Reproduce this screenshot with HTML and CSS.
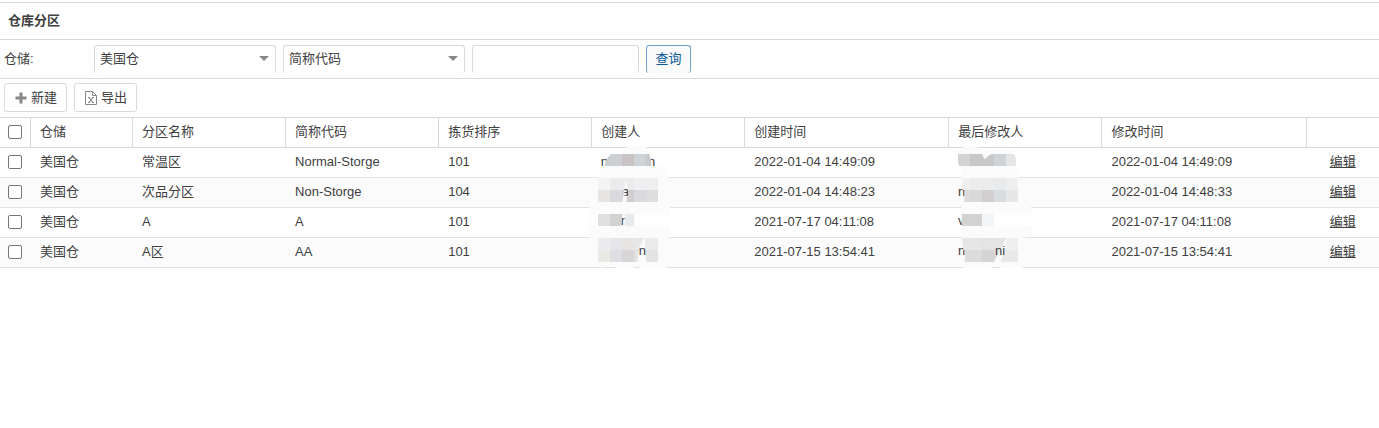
FILE: index.html
```html
<!DOCTYPE html>
<html lang="zh-CN">
<head>
    <meta charset="UTF-8">
    <meta name="viewport" content="width=device-width, initial-scale=1.0">
    <title>仓库分区</title>
    <link rel="stylesheet" href="styles.css">
</head>
<body>
    <h1 class="page-title">仓库分区</h1>

    <form class="filter-bar">
        <label class="filter-label" for="warehouse">仓储:</label>
        <div class="select-box">
            <select id="warehouse">
                <option>美国仓</option>
            </select>
        </div>
        <div class="select-box">
            <select aria-label="查询字段">
                <option>简称代码</option>
            </select>
        </div>
        <input class="keyword" type="text" aria-label="关键字">
        <button class="search-btn" type="button">查询</button>
    </form>

    <div class="toolbar">
        <button class="tool-btn" type="button">
            <svg width="12" height="12" viewBox="0 0 12 12"><path d="M4.5 0.5h3v4h4v3h-4v4h-3v-4h-4v-3h4z" fill="#878787"/></svg>
            新建
        </button>
        <button class="tool-btn" type="button">
            <svg width="12" height="14" viewBox="0 0 12 14" fill="none" stroke="#878787"><path d="M0.5 0.5h7l4 4v9h-11z"/><path d="M7.5 0.5v4h4"/><path d="M3 6.5h2M7 6.5h2M3 11.5h2M7 11.5h2"/><path d="M4 6.5l4 5M8 6.5l-4 5" stroke-width="1.2"/></svg>
            导出
        </button>
    </div>

    <table class="grid">
        <colgroup>
            <col class="col-check">
            <col class="col-small">
            <col class="col-medium">
            <col class="col-medium">
            <col class="col-medium">
            <col class="col-medium">
            <col class="col-large">
            <col class="col-medium">
            <col class="col-large">
            <col>
        </colgroup>
        <thead>
            <tr>
                <th class="check"><input type="checkbox" aria-label="全选"></th>
                <th>仓储</th>
                <th>分区名称</th>
                <th>简称代码</th>
                <th>拣货排序</th>
                <th>创建人</th>
                <th>创建时间</th>
                <th>最后修改人</th>
                <th>修改时间</th>
                <th></th>
            </tr>
        </thead>
        <tbody>
            <tr>
                <td class="check"><input type="checkbox" aria-label="选择 常温区"></td>
                <td>美国仓</td>
                <td>常温区</td>
                <td>Normal-Storge</td>
                <td>101</td>
                <td class="masked">
                    <!-- 创建人打码 -->
                    <svg class="mosaic mosaic-creator" width="82" height="130" viewBox="24 90 246 390">
                        <defs>
                            <clipPath id="gap"><path d="M133 200h11v61h-11z"/></clipPath>
                        </defs>
                        <path d="M72 152Q75 120 128 115Q132 92 170 91Q208 92 214 115L222 150Q258 152 265 190V260H270V297H265V333H270V365H265L262 440L258 478H180V455H165Q140 478 110 458L85 452L60 458L55 440L30 365L25 333L30 297L25 262L54 259V190Q56 160 72 152Z" fill="#fbfbfb"/>
                        <path d="M30 299H265V333H30Z" fill="#fefefe"/>
                        <g class="letters"><text x="62" y="152">n</text><text x="204" y="152">n</text><text x="122" y="329">r</text></g>
                        <path d="M75 153Q77 128 94 117H126V153Z" fill="#cdd0d3"/>
                        <path d="M126 117h36v36h-36z" fill="#c9c3c4"/>
                        <path d="M162 117h36v36h-36z" fill="#cdd3d6"/>
                        <path d="M198 117h10q6 18 6 36h-16z" fill="#cacace"/>
                        <path d="M54 189h36v36h-36z" fill="#f3f3f3"/>
                        <path d="M90 189h72v36h-72z" fill="#ebebed"/>
                        <path d="M162 189h72v36h-72z" fill="#efeff1"/>
                        <path d="M54 225h36v36h-36z" fill="#e8e4e1"/>
                        <path d="M90 225h36v36h-36z" fill="#dadade"/>
                        <path d="M126 225h36v36h-36z" fill="#d0cecf"/>
                        <path d="M162 225h36v36h-36z" fill="#d9d9de"/>
                        <path d="M198 225h36v36h-36z" fill="#dedede"/>
                        <path d="M137 198L141 208L140 261H127Z" fill="#fbfbfb"/>
                        <g class="letters" clip-path="url(#gap)"><text x="125" y="242">a</text></g>
                        <path d="M54 297h36v36h-36z" fill="#e0e0e0"/>
                        <path d="M90 297h38l-4 36h-34z" fill="#d2d2d2"/>
                        <path d="M134 297h28v36h-28z" fill="#e8eaec"/>
                        <path d="M54 369h36v36h-36z" fill="#ececee"/>
                        <path d="M90 369h36v36h-36z" fill="#e6e6ea"/>
                        <path d="M126 369h36v36h-36z" fill="#e9e4e4"/>
                        <path d="M162 369h36v36h-36z" fill="#e6e6e8"/>
                        <path d="M198 369h36v36h-36z" fill="#ebebeb"/>
                        <path d="M54 405h36v36h-36z" fill="#ebe9e6"/>
                        <path d="M90 405h36v36h-36z" fill="#dedfe3"/>
                        <path d="M126 405h36v36h-36z" fill="#d8d5d8"/>
                        <path d="M162 405h14l-4 36h-10z" fill="#e2e2e4"/>
                        <path d="M194 405h40v36h-40z" fill="#e3e3e3"/>
                        <path d="M195 365L198 441H174L178 396Z" fill="#fbfbfb"/>
                        <g class="letters"><text x="176" y="419">n</text></g>
                    </svg>
                </td>
                <td>2022-01-04 14:49:09</td>
                <td class="masked">
                    <!-- 最后修改人打码 -->
                    <svg class="mosaic mosaic-editor" width="88" height="130" viewBox="24 90 264 390">
                        <path d="M54 150V117Q66 92 94 93Q120 94 130 117Q160 98 200 104Q228 112 229 153L234 190V261H272L275 297H268V333H278L276 365L234 370V441L252 443Q250 474 215 476Q180 474 178 443H165L148 476H74L72 441L65 365V190L66 156Z" fill="#fbfbfb"/>
                        <path d="M66 297H270V333H66Z" fill="#fefefe"/>
                        <g class="letters"><text x="54" y="152">v</text><text x="54" y="242">n</text><text x="54" y="331">v</text><text x="54" y="419">n</text></g>
                        <path d="M54 117h36v36h-32q-4-8-4-16z" fill="#d3d3d3"/>
                        <path d="M90 117h36q5 12 10 16q10-16 26-16v36h-72z" fill="#c8c8c9"/>
                        <path d="M162 117h36v36h-36z" fill="#ced3d5"/>
                        <path d="M198 117h24q6 8 6 20v16h-30z" fill="#e5e5e5"/>
                        <path d="M66 189h24v36h-22z" fill="#f0f0ef"/>
                        <path d="M90 189h72v36h-72z" fill="#ececec"/>
                        <path d="M162 189h36v36h-36z" fill="#e8eaec"/>
                        <path d="M198 189h34l2 36h-36z" fill="#eeeeee"/>
                        <path d="M74 225h16v36h-18z" fill="#dcdcdc"/>
                        <path d="M90 225h36v36h-36z" fill="#d9d9db"/>
                        <path d="M126 225h36v36h-36z" fill="#d1cfd0"/>
                        <path d="M162 225h36v36h-36z" fill="#d9dddf"/>
                        <path d="M198 225h36v36h-36z" fill="#e7e7e7"/>
                        <path d="M65 297h61v36h-61z" fill="#d3d3d3"/>
                        <path d="M126 297h36v36h-36z" fill="#f3f5f9"/>
                        <path d="M66 369h60v36h-56z" fill="#e6e6e6"/>
                        <path d="M126 369h72v36h-72z" fill="#e4e4e4"/>
                        <path d="M198 369h36v36h-36z" fill="#efefef"/>
                        <path d="M74 405h52v36h-52z" fill="#dcdcdc"/>
                        <path d="M126 405h36v36h-36z" fill="#d6d3d4"/>
                        <path d="M162 405h18l-12 36h-6z" fill="#dcdcdc"/>
                        <path d="M180 405h54v36h-54z" fill="#e9e9e9"/>
                        <path d="M202 362L196 400L182 441H162L186 394Z" fill="#fbfbfb"/>
                        <g class="letters"><text x="165" y="419">ni</text></g>
                    </svg>
                </td>
                <td>2022-01-04 14:49:09</td>
                <td class="action"><a href="#">编辑</a></td>
            </tr>
            <tr>
                <td class="check"><input type="checkbox" aria-label="选择 次品分区"></td>
                <td>美国仓</td>
                <td>次品分区</td>
                <td>Non-Storge</td>
                <td>104</td>
                <td></td>
                <td>2022-01-04 14:48:23</td>
                <td></td>
                <td>2022-01-04 14:48:33</td>
                <td class="action"><a href="#">编辑</a></td>
            </tr>
            <tr>
                <td class="check"><input type="checkbox" aria-label="选择 A"></td>
                <td>美国仓</td>
                <td>A</td>
                <td>A</td>
                <td>101</td>
                <td></td>
                <td>2021-07-17 04:11:08</td>
                <td></td>
                <td>2021-07-17 04:11:08</td>
                <td class="action"><a href="#">编辑</a></td>
            </tr>
            <tr>
                <td class="check"><input type="checkbox" aria-label="选择 A区"></td>
                <td>美国仓</td>
                <td>A区</td>
                <td>AA</td>
                <td>101</td>
                <td></td>
                <td>2021-07-15 13:54:41</td>
                <td></td>
                <td>2021-07-15 13:54:41</td>
                <td class="action"><a href="#">编辑</a></td>
            </tr>
        </tbody>
    </table>
</body>
</html>
```
FILE: styles.css
```css
* {
    margin: 0;
    padding: 0;
    box-sizing: border-box;
}

body {
    padding-top: 2px;
    background: #fff;
    color: #404040;
    font-family: "Liberation Sans", "Noto Sans CJK SC", sans-serif;
    font-size: 13px;
    line-height: 20px;
}

button,
input,
select {
    font: inherit;
    color: inherit;
}

.page-title {
    padding: 8px;
    border-top: 1px solid #d9d9d9;
    border-bottom: 1px solid #d9d9d9;
    font-size: 13px;
    font-weight: bold;
}

/* 查询栏 */
.filter-bar {
    display: flex;
    gap: 7px;
    padding: 5px 4px;
    border-bottom: 1px solid #d9d9d9;
}

.filter-label {
    width: 83px;
    padding-top: 4px;
}

.select-box {
    position: relative;
    width: 182px;
}

.select-box::after {
    content: "";
    position: absolute;
    top: 11px;
    right: 7px;
    border: 5px solid transparent;
    border-top-color: #878787;
    border-bottom: 0;
    pointer-events: none;
}

.select-box select,
.keyword,
.search-btn {
    height: 28px;
    border: 1px solid #d9d9d9;
    border-bottom: 0;
    border-radius: 3px;
    background: #fff;
}

.select-box select {
    width: 100%;
    padding: 0 5px 2px;
    appearance: none;
}

.keyword {
    width: 167px;
    padding: 0 5px;
}

.search-btn {
    width: 45px;
    padding-bottom: 2px;
    border-color: #6fa3cf;
    background: #fafafa;
    color: #0b5a9d;
}

/* 工具栏 */
.toolbar {
    display: flex;
    gap: 7px;
    padding: 4px 4px 5px;
}

.tool-btn {
    display: flex;
    align-items: center;
    gap: 4px;
    width: 63px;
    height: 29px;
    padding-left: 10px;
    border: 1px solid #d9d9d9;
    border-radius: 3px;
    background: #fff;
}

/* 列表 */
.grid {
    width: 100%;
    table-layout: fixed;
    border-collapse: separate;
    border-spacing: 0;
}

.col-check {
    width: 31px;
}

.col-small {
    width: 7.4%;
}

.col-medium {
    width: 11.1%;
}

.col-large {
    width: 14.8%;
}

.grid th,
.grid td {
    height: 30px;
    padding: 0 9px 2px;
    border-bottom: 1px solid #e2e2e2;
    font-weight: normal;
    text-align: left;
    white-space: nowrap;
}

.grid th {
    height: 31px;
    border-top: 1px solid #d9d9d9;
    border-right: 1px solid #d9d9d9;
    border-bottom-color: #d9d9d9;
}

.grid th:last-child {
    border-right: 0;
}

.grid tbody tr:nth-child(even) {
    background: #fbfbfb;
}

.grid .check {
    padding: 0 8px 2px;
}

.check input {
    display: block;
    width: 14px;
    height: 14px;
    border: 1px solid #767676;
    border-radius: 2px;
    background: #fff;
    appearance: none;
}

.grid .action {
    text-align: center;
}

.action a {
    color: inherit;
}

/* 姓名马赛克，覆盖在整列之上 */
.grid .masked {
    position: relative;
}

.mosaic {
    position: absolute;
    top: -3px;
    left: -4px;
    z-index: 1;
    pointer-events: none;
}

.mosaic-editor {
    left: -1px;
}

.letters {
    fill: #404040;
    font-size: 39px;
}
```
